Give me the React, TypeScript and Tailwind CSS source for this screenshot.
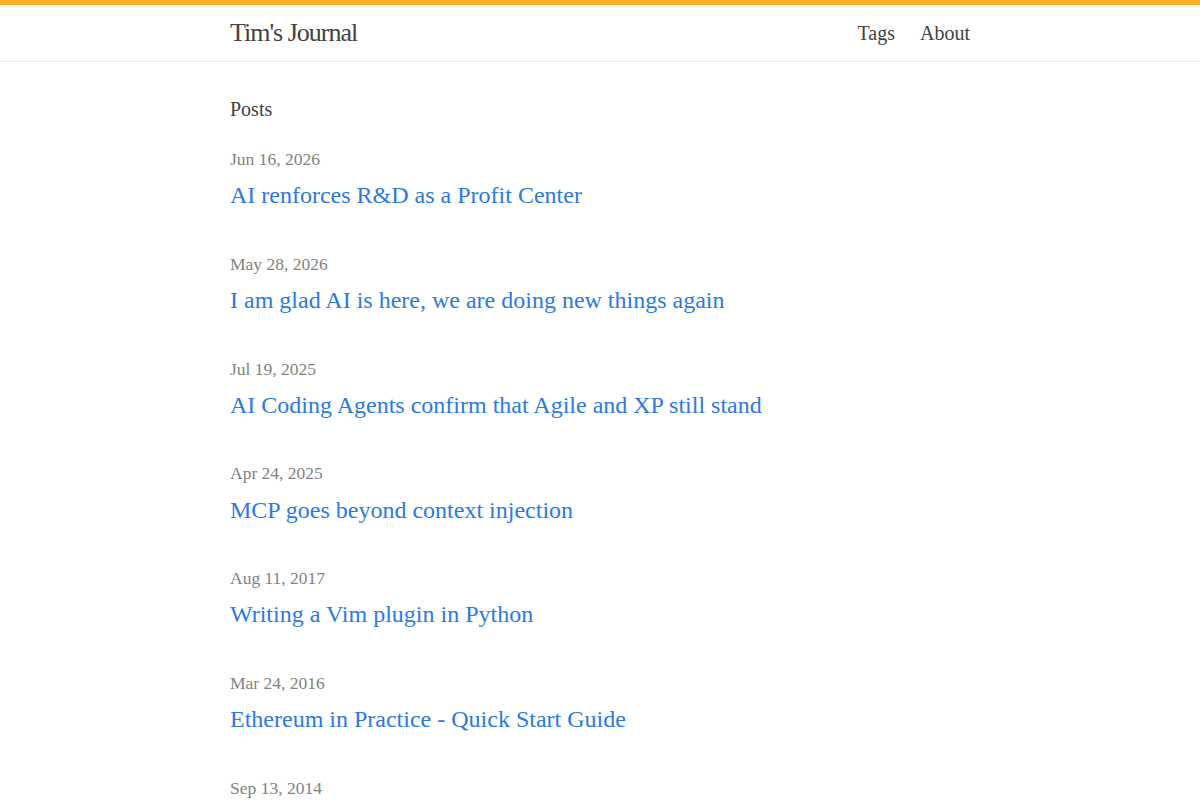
import React from "react";

const posts = [
  { date: "Jun 16, 2026", title: "AI renforces R&D as a Profit Center" },
  { date: "May 28, 2026", title: "I am glad AI is here, we are doing new things again" },
  { date: "Jul 19, 2025", title: "AI Coding Agents confirm that Agile and XP still stand" },
  { date: "Apr 24, 2025", title: "MCP goes beyond context injection" },
  { date: "Aug 11, 2017", title: "Writing a Vim plugin in Python" },
  { date: "Mar 24, 2016", title: "Ethereum in Practice - Quick Start Guide" },
  { date: "Sep 13, 2014", title: "Notes" },
];

export default function App() {
  return (
    <div
      className="min-h-screen bg-white text-[#424242]"
      style={{ fontFamily: '"Liberation Serif", "Times New Roman", serif' }}
    >
      <header className="border-t-[5px] border-t-[#fbb023] border-b border-b-[#e8e8e8]">
        <div className="w-[740px] mx-auto h-[56px] flex items-center justify-between">
          <a className="text-[26px] tracking-[-1px] leading-[56px] text-[#424242]">Tim's Journal</a>
          <nav className="flex gap-[25px] text-[20px] leading-[56px] text-[#424242]">
            <a>Tags</a>
            <a>About</a>
          </nav>
        </div>
      </header>
      <main className="w-[740px] mx-auto pt-[32px]">
        <h2 className="text-[20px] leading-[30px]">Posts</h2>
        <ul className="mt-[22px] flex flex-col gap-[37.5px]">
          {posts.map((p) => (
            <li key={p.date}>
              <div className="text-[17.5px] leading-[26.25px] text-[#828282]">{p.date}</div>
              <h3 className="mt-[5px] text-[24px] leading-[36px]">
                <a className="text-[#2a7ae2]">{p.title}</a>
              </h3>
            </li>
          ))}
        </ul>
      </main>
    </div>
  );
}
